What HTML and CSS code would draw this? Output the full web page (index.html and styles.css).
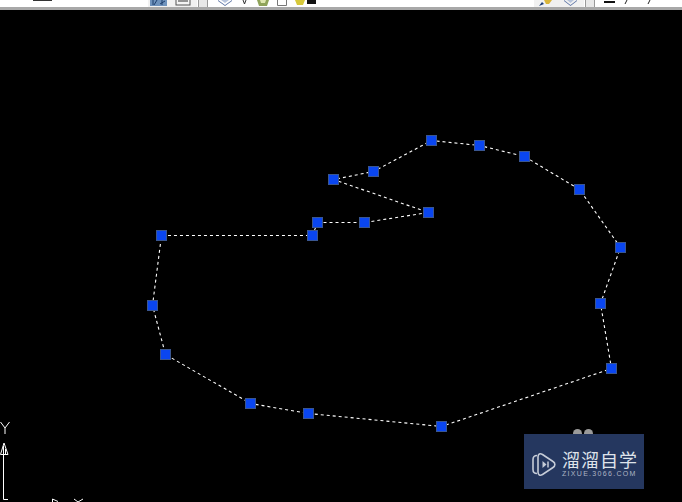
FILE: index.html
```html
<!DOCTYPE html>
<html lang="en">
<head>
  <meta charset="UTF-8">
  <meta name="viewport" content="width=device-width, initial-scale=1.0">
  <title>CAD drawing</title>
  <link rel="stylesheet" href="styles.css">
</head>
<body>
  <div class="toolbar">
    <span class="cmd-text cmd-left"></span>
    <div class="tool-group group-a">
      <svg class="tool" width="17" height="7" viewBox="0 0 17 7"><rect x="0" y="-3" width="17" height="9" fill="#6f93bd"/><path d="M3 0v5M7 0l-3 5M12 0v5M15 1l-5 3" stroke="#1f3f6d" fill="none"/></svg>
      <svg class="tool" width="16" height="7" viewBox="0 0 16 7"><rect x="1" y="-3" width="14" height="8" fill="#f4f4f4" stroke="#555"/><path d="M3 1h10" stroke="#333"/></svg>
    </div>
    <span class="grip"></span>
    <div class="tool-group group-b">
      <svg class="tool" width="14" height="7" viewBox="0 0 14 7"><path d="M0 0l7 5 7-5v1l-7 5-7-5z" fill="#5f76a6"/><path d="M3 0h8l-4 3z" fill="#b7c4dc"/></svg>
      <svg class="tool" width="9" height="7" viewBox="0 0 9 7"><path d="M3 0l1.500 4L6 0" stroke="#333" fill="none"/></svg>
      <svg class="tool" width="12" height="7" viewBox="0 0 12 7"><path d="M0 0h12l-2 6H2z" fill="#8fa35a"/><path d="M3 0h6l-1 3H4z" fill="#dfe6b0"/></svg>
      <svg class="tool" width="10" height="7" viewBox="0 0 10 7"><path d="M.5 0v5.500h9V0" stroke="#777" fill="#fff"/></svg>
      <svg class="tool" width="21" height="7" viewBox="0 0 21 7"><path d="M0 0h10L8 5H2z" fill="#d6c83a"/><rect x="12" width="9" height="4" fill="#111"/></svg>
    </div>
    <div class="tool-group group-c">
      <svg class="tool" width="16" height="7" viewBox="0 0 16 7"><path d="M1 6l3-4 2 2z" fill="#1d3d78"/><path d="M6 0h8l-3 4H8z" fill="#d9b53a"/></svg>
      <svg class="tool" width="13" height="7" viewBox="0 0 13 7"><path d="M0 0l6.500 5L13 0v1L6.500 6 0 1z" fill="#5f76a6"/><path d="M3 0h7L6.500 3z" fill="#b7c4dc"/></svg>
    </div>
    <span class="grip"></span>
    <div class="tool-group group-d">
      <svg class="tool" width="11" height="7" viewBox="0 0 11 7"><rect y="1" width="11" height="2" fill="#111"/></svg>
      <svg class="tool" width="5" height="7" viewBox="0 0 5 7"><path d="M3 0L1 4" stroke="#222" fill="none"/></svg>
      <svg class="tool" width="14" height="7" viewBox="0 0 14 7"><path d="M12 0L10 4" stroke="#222" fill="none"/></svg>
    </div>
  </div>

  <div class="canvas">
    <svg class="drawing" width="682" height="492" viewBox="0 10 682 492">
      <polyline class="outline" points="317.500,222.500 364.500,222.500 428.500,212.500 333.500,179.500 373.500,171.500 431.500,140.500 479.500,145.500 524.500,156.500 579.500,189.500 620.500,247.500 600.500,303.500 611.500,368.500 441.500,426.500 308.500,413.500 250.500,403.500 165.500,354.500 152.500,305.500 161.500,235.500 312.500,235.500 317.500,222.500"/>
      <g class="grips">
        <rect x="312.500" y="217.500" width="10" height="10"/>
        <rect x="359.500" y="217.500" width="10" height="10"/>
        <rect x="423.500" y="207.500" width="10" height="10"/>
        <rect x="328.500" y="174.500" width="10" height="10"/>
        <rect x="368.500" y="166.500" width="10" height="10"/>
        <rect x="426.500" y="135.500" width="10" height="10"/>
        <rect x="474.500" y="140.500" width="10" height="10"/>
        <rect x="519.500" y="151.500" width="10" height="10"/>
        <rect x="574.500" y="184.500" width="10" height="10"/>
        <rect x="615.500" y="242.500" width="10" height="10"/>
        <rect x="595.500" y="298.500" width="10" height="10"/>
        <rect x="606.500" y="363.500" width="10" height="10"/>
        <rect x="436.500" y="421.500" width="10" height="10"/>
        <rect x="303.500" y="408.500" width="10" height="10"/>
        <rect x="245.500" y="398.500" width="10" height="10"/>
        <rect x="160.500" y="349.500" width="10" height="10"/>
        <rect x="147.500" y="300.500" width="10" height="10"/>
        <rect x="156.500" y="230.500" width="10" height="10"/>
        <rect x="307.500" y="230.500" width="10" height="10"/>
      </g>
      <g class="ucs">
        <path d="M3.500 455V499.500H8"/>
        <path d="M0.500 454.500H8L4 443Z"/>
        <path d="M3.500 446V454M5.500 449V454"/>
        <path d="M0.500 422L5 428V434M9.500 422L5 428"/>
        <path d="M52.500 499L58 501.500M52.500 499V502"/>
        <path d="M74 499L78 502M83 499L78 502"/>
      </g>
    </svg>

    <div class="watermark">
      <svg class="wm-logo" width="24" height="25" viewBox="0 0 24 25">
        <path d="M5 3.500C2.500 3.500 1 5 1 7.500V17.500C1 20 2.500 21.500 5 21.500"/>
        <path d="M6 5C6 2 8 1 10.500 2.500L21 9.500C23.500 11 23.500 14 21 15.500L10.500 22.500C8 24 6 23 6 20Z"/>
        <path d="M10.500 9V16L14.500 12.500Z" class="wm-play"/>
        <path d="M16 9.500V15.500" class="wm-bar"/>
      </svg>
      <div class="wm-text">
        <div class="wm-name">溜溜自学</div>
        <div class="wm-url">ZIXUE.3066.COM</div>
      </div>
      <span class="wm-bump wm-bump-left"></span>
      <span class="wm-bump wm-bump-right"></span>
    </div>
  </div>
</body>
</html>
```

FILE: styles.css
```css
/* Basic styles */
html,
body {
  margin: 0;
  padding: 0;
  height: 100%;
  overflow: hidden;
  background-color: #000;
  font-family: "Liberation Sans", sans-serif;
}

/* Toolbar strip, only its bottom edge is in view */
.toolbar {
  display: flex;
  align-items: flex-start;
  height: 7px;
  padding-left: 33px;
  overflow: hidden;
  background-color: #fff;
  border-bottom: 3px solid #a8a8a8;
}
.cmd-left {
  flex-shrink: 0;
  width: 19px;
  height: 1px;
  background-color: #333;
}
.tool-group {
  display: flex;
  flex-shrink: 0;
  height: 7px;
  background-color: #f1f1f1;
}
.tool {
  display: block;
  flex-shrink: 0;
}
.group-a {
  gap: 8px;
  margin-left: 96px;
  padding: 0 6px 0 2px;
}
.grip {
  flex-shrink: 0;
  width: 8px;
  height: 7px;
  margin: 0 1px;
  border-left: 1px solid #999;
  border-right: 1px solid #999;
  background-color: #e8e8e8;
}
.group-b {
  gap: 8px;
  width: 101px;
  padding-left: 9px;
  background-color: #fff;
}
.group-c {
  gap: 10px;
  margin-left: 215px;
  padding: 0 7px 0 4px;
}
.group-d {
  gap: 9px;
  padding-left: 8px;
  background-color: #fff;
}

/* Drawing area */
.canvas {
  position: relative;
  z-index: 0;
  height: 492px;
  background-color: #000;
}
.drawing {
  display: block;
}
.outline {
  fill: none;
  stroke: #fff;
  stroke-width: 1.1;
  stroke-dasharray: 3 3;
}
.grips rect {
  fill: #0a46f0;
  stroke: #3a5690;
  stroke-width: 1;
}
.ucs path {
  fill: none;
  stroke: #fff;
  stroke-width: 1;
}

/* Site watermark */
.watermark {
  position: absolute;
  left: 524px;
  top: 424px;
  display: flex;
  align-items: center;
  gap: 6px;
  box-sizing: border-box;
  width: 120px;
  height: 55px;
  padding: 5px 0 0 8px;
  background-color: #25375f;
}
.wm-logo {
  flex-shrink: 0;
  fill: none;
  stroke: #c6ccd8;
  stroke-width: 1.6;
}
.wm-play {
  stroke: none;
  fill: #c6ccd8;
}
.wm-bar {
  stroke-width: 1.500;
}
.wm-text {
  color: #dfe3ea;
  white-space: nowrap;
}
.wm-name {
  font-family: "Noto Sans CJK SC", sans-serif;
  font-size: 18px;
  line-height: 19px;
  letter-spacing: 1px;
}
.wm-url {
  margin-top: 1px;
  font-size: 7px;
  line-height: 8px;
  letter-spacing: 1.3px;
  color: #aeb5c4;
}
.wm-bump {
  position: absolute;
  top: -5px;
  width: 9px;
  height: 9px;
  border-radius: 50%;
  background-color: #9a9a9a;
  z-index: -1;
}
.wm-bump-left {
  left: 49px;
}
.wm-bump-right {
  left: 60px;
}
```
